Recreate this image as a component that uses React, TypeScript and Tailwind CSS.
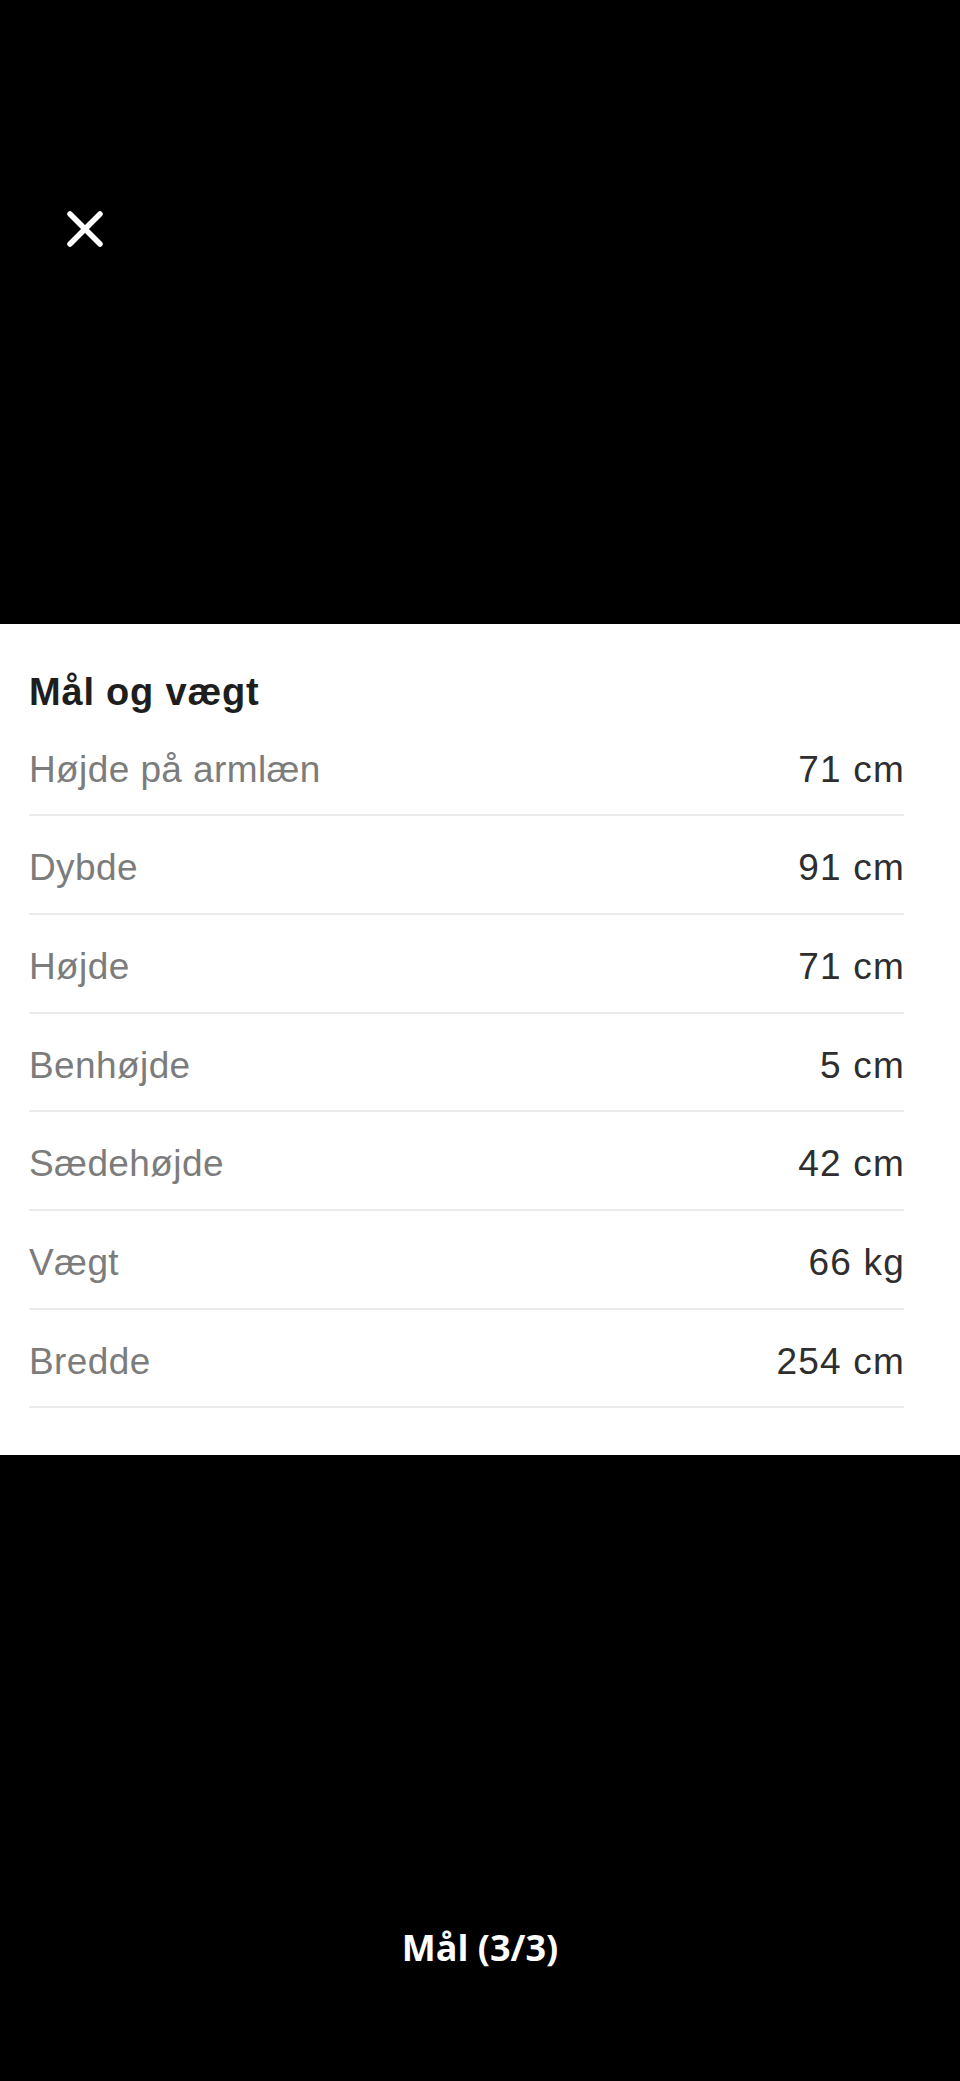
import React from 'react';

interface SpecRow {
    label: string;
    value: string;
}

const rows: SpecRow[] = [
    { label: 'Højde på armlæn', value: '71 cm' },
    { label: 'Dybde', value: '91 cm' },
    { label: 'Højde', value: '71 cm' },
    { label: 'Benhøjde', value: '5 cm' },
    { label: 'Sædehøjde', value: '42 cm' },
    { label: 'Vægt', value: '66 kg' },
    { label: 'Bredde', value: '254 cm' },
];

const CloseIcon: React.FC = () => (
    <svg width="36" height="36" viewBox="0 0 36 36" fill="none">
        <path d="M3 3L33 33M33 3L3 33" stroke="#ffffff" strokeWidth="5.5" strokeLinecap="round" />
    </svg>
);

export default function App() {
    return (
        <div className="min-h-[2081px] w-full bg-black flex flex-col">
            <div className="h-[624px] pt-[211px] pl-[67px]">
                <button className="block" aria-label="Luk">
                    <CloseIcon />
                </button>
            </div>

            <div className="bg-white pt-[46px] pb-[47px] pl-[29px] pr-[56px] font-['Liberation_Sans',Arial,sans-serif]">
                <h2 className="h-[44px] leading-[44px] text-[38px] font-bold tracking-[0.8px] text-[#1e1e1e] mb-[3.5px]">
                    Mål og vægt
                </h2>
                <ul>
                    {rows.map((row) => (
                        <li
                            key={row.label}
                            className="flex items-center justify-between pt-[30px] pb-[22.7px] border-b-2 border-[#ebebeb]"
                        >
                            <span className="h-[44px] leading-[44px] text-[37px] tracking-[0.4px] text-[#7c7c7c]">
                                {row.label}
                            </span>
                            <span className="h-[44px] leading-[44px] text-[37px] tracking-[1.2px] text-[#2e2e2e] -mr-[1px]">
                                {row.value}
                            </span>
                        </li>
                    ))}
                </ul>
            </div>

            <div className="flex-1 pt-[469px] flex justify-center">
                <span className="h-[48px] leading-[48px] text-[36px] font-bold text-white font-['Open_Sans',sans-serif]">
                    Mål (3/3)
                </span>
            </div>
        </div>
    );
}
